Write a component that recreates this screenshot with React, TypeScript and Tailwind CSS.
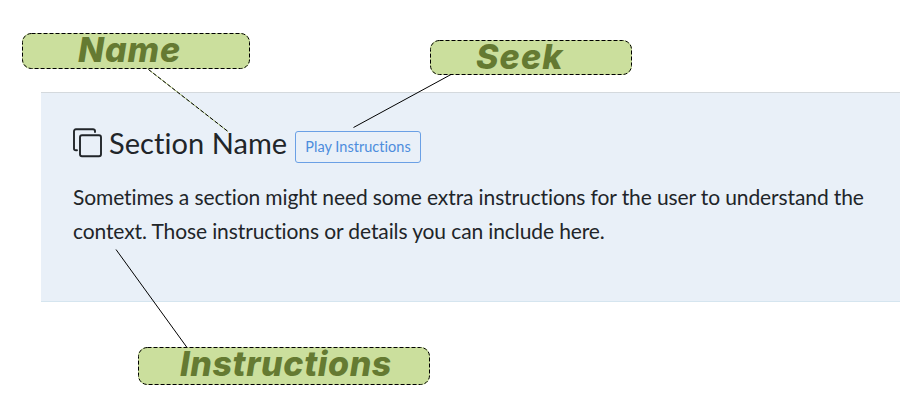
const Label = ({ box, text, children }: { box: string; text: string; children: string }) => (
  <div className={`absolute rounded-[9px] bg-[#cbdf9d] ${box}`}>
    <svg className="absolute inset-0 h-full w-full" fill="none">
      <rect x="0.5" y="0.5" width="100%" height="100%" rx="9" stroke="#000" strokeDasharray="4 2" style={{ width: 'calc(100% - 1px)', height: 'calc(100% - 1px)' }} />
    </svg>
    <span className={`absolute whitespace-nowrap font-['Inter',sans-serif] font-extrabold italic leading-none text-[#657a32] [font-feature-settings:'cv11'] ${text}`}>{children}</span>
  </div>
);

export default function App() {
  return (
    <main className="relative h-[410px] w-[924px] overflow-hidden bg-white pl-[41px] pt-[92px] font-['Lato',sans-serif] text-[#212529]">
      <section className="h-[210px] w-[859px] border-b border-t border-b-[#d5e5ef] border-t-[#d4d9dd] bg-[#e9f0f8] pl-8 pt-[32px]">
        <div className="flex h-[36px] items-center">
          <svg className="mr-[6px] h-[30px] w-[30px]" viewBox="0 0 30 30" fill="none" stroke="#212529" strokeWidth="1.9" strokeLinecap="round" strokeLinejoin="round">
            <rect x="7" y="7.3" width="21" height="21" rx="2" />
            <path d="M22 4V3Q22 1.3 20 1.3H3Q1 1.3 1 3.3V20.5Q1 22.3 3 22.3H4" />
          </svg>
          <h1 className="w-[186px] whitespace-nowrap text-[29px] leading-9 tracking-[0.06px]">Section Name</h1>
          <button className="mt-[7px] h-8 w-[126px] shrink-0 whitespace-nowrap rounded-[3px] border border-[#6aa0e5] text-[14.5px] tracking-[0.02px] text-[#4d8ddd]">Play Instructions</button>
        </div>
        <p className="mt-[19px] text-[21px] leading-[34px]">
          <span className="block whitespace-nowrap tracking-[-0.11px]">Sometimes a section might need some extra instructions for the user to understand the</span>
          <span className="block whitespace-nowrap tracking-[-0.11px]">context. Those instructions or details you can include here.</span>
        </p>
      </section>
      <svg className="absolute inset-0 h-full w-full" fill="none" stroke="#000" strokeWidth="1">
        <path d="M148.5 69.5L228 131.5" stroke="#b7cf7e" />
        <path d="M148.5 69.5L228 131.5" strokeDasharray="4 2" />
        <path d="M451 74.5L353.5 127.5M116 249.5L187 347.5" />
      </svg>
      <Label box="left-[22px] top-[33px] h-9 w-[228px]" text="left-[56px] top-0 text-[34px] tracking-[0.9px]">Name</Label>
      <Label box="left-[430px] top-[40px] h-[35px] w-[202px]" text="left-[46px] top-0 text-[34px] tracking-[1.1px]">Seek</Label>
      <Label box="left-[138px] top-[347px] h-[38px] w-[292px]" text="left-[42px] top-0 text-[34px] tracking-[0.6px]">Instructions</Label>
    </main>
  );
}
